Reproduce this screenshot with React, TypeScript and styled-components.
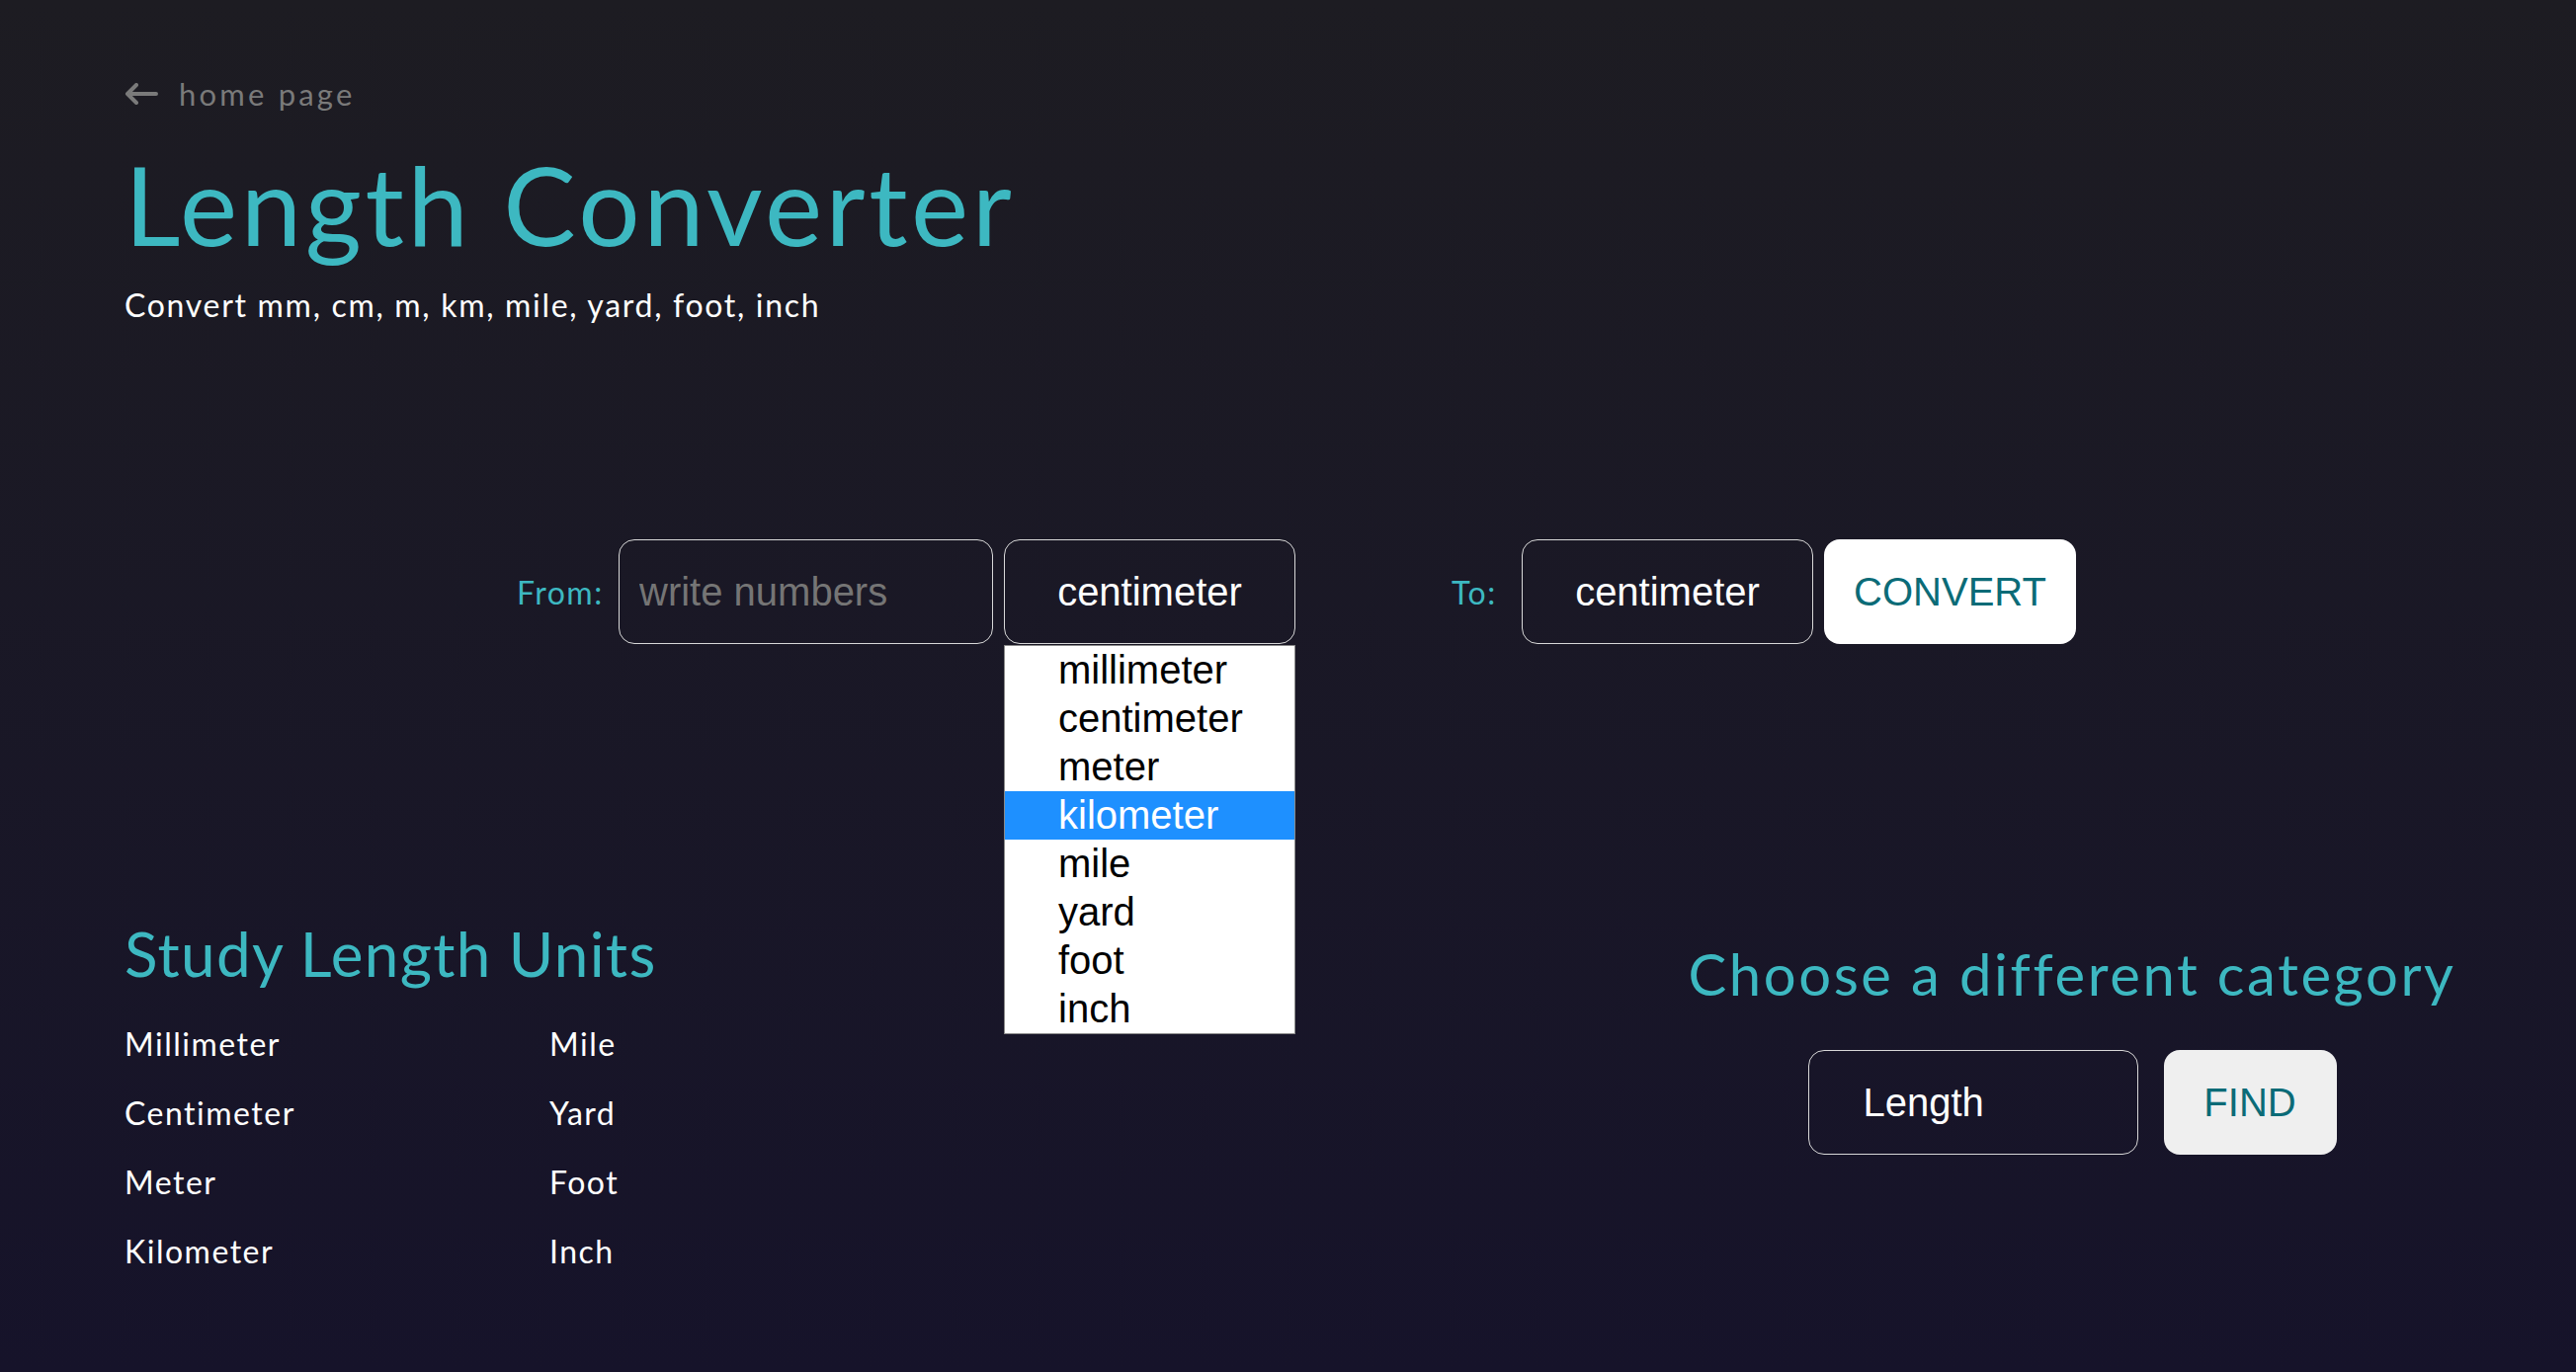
import React from "react";
import styled, { createGlobalStyle } from "styled-components";

const GlobalStyle = createGlobalStyle`
  html, body {
    margin: 0;
    padding: 0;
  }
  body {
    font-family: "Lato", "Open Sans", sans-serif;
  }
  * {
    box-sizing: border-box;
  }
`;

const Page = styled.div`
  min-height: 100vh;
  background: linear-gradient(180deg, #1d1c22 0%, #16132a 100%);
  padding: 77px 110px 0 126px;
  color: #ffffff;
`;

const BackLink = styled.a`
  display: flex;
  align-items: center;
  gap: 21px;
  height: 36px;
  font-size: 31px;
  line-height: 36px;
  letter-spacing: 3.2px;
  color: #7a7a7a;
  text-decoration: none;
`;

const Title = styled.h1`
  margin: 27px 0 0;
  font-size: 110px;
  line-height: 132px;
  font-weight: 400;
  letter-spacing: 3.6px;
  color: #3db8c1;
`;

const Subtitle = styled.p`
  margin: 18px 0 0;
  font-size: 32px;
  line-height: 38px;
  letter-spacing: 1.7px;
  color: #ffffff;
`;

const ConverterRow = styled.div`
  display: flex;
  align-items: center;
  margin: 218px 0 0 397px;
`;

const Label = styled.label<{ $width: number; $gap: number; $before?: number }>`
  width: ${(p) => p.$width}px;
  margin-left: ${(p) => p.$before ?? 0}px;
  margin-right: ${(p) => p.$gap}px;
  text-align: right;
  font-size: 32px;
  letter-spacing: 1.5px;
  color: #3db8c1;
  white-space: nowrap;
`;

const NumberInput = styled.input`
  width: 379px;
  height: 106px;
  padding: 0 20px;
  border: 1px solid #d8d8d8;
  border-radius: 16px;
  background: transparent;
  color: #ffffff;
  font-family: "Liberation Sans", Arial, sans-serif;
  font-size: 40px;
  outline: none;
  &::placeholder {
    color: #757575;
  }
`;

const SelectWrap = styled.div`
  position: relative;
  margin-left: 11px;
`;

const UnitSelect = styled.select<{ $align?: string; $width?: number }>`
  appearance: none;
  height: 106px;
  width: ${(p) => (p.$width ? `${p.$width}px` : "auto")};
  padding: 0 53px 0 ${(p) => (p.$align === "left" ? 55 : 53)}px;
  border: 1px solid #d8d8d8;
  border-radius: 16px;
  background: transparent;
  color: #ffffff;
  font-family: "Liberation Sans", Arial, sans-serif;
  font-size: 40px;
  text-align: ${(p) => p.$align ?? "center"};
  text-align-last: ${(p) => p.$align ?? "center"};
  outline: none;
  option {
    color: #000000;
  }
`;

const OptionList = styled.ul`
  position: absolute;
  top: calc(100% + 1px);
  left: 0;
  right: 0;
  margin: 0;
  padding: 0;
  list-style: none;
  background: #ffffff;
  border: 1px solid #8a8a8a;
  z-index: 2;
`;

const OptionItem = styled.li<{ $active?: boolean }>`
  height: 49px;
  padding-left: 54px;
  font-family: "Liberation Sans", Arial, sans-serif;
  font-size: 40px;
  line-height: 49px;
  color: ${(p) => (p.$active ? "#ffffff" : "#000000")};
  background: ${(p) => (p.$active ? "#1e90ff" : "transparent")};
`;

const ActionButton = styled.button<{ $bg: string; $width: number; $gap: number }>`
  height: 106px;
  width: ${(p) => p.$width}px;
  margin-left: ${(p) => p.$gap}px;
  border: none;
  border-radius: 16px;
  background: ${(p) => p.$bg};
  color: #0b6b77;
  font-family: "Liberation Sans", Arial, sans-serif;
  font-size: 40px;
  cursor: pointer;
`;

const BottomSection = styled.div`
  display: flex;
  justify-content: space-between;
  align-items: flex-start;
  margin-top: 276px;
`;

const StudyColumn = styled.div`
  display: flex;
  flex-direction: column;
`;

const SectionTitle = styled.h2<{ $size: number; $spacing: number }>`
  margin: 0;
  font-size: ${(p) => p.$size}px;
  line-height: ${(p) => Math.round(p.$size * 1.2)}px;
  letter-spacing: ${(p) => p.$spacing}px;
  font-weight: 400;
  color: #3db8c1;
  white-space: nowrap;
`;

const UnitGrid = styled.div`
  display: grid;
  grid-template-columns: 430px auto;
  grid-auto-flow: column;
  grid-template-rows: repeat(4, 70px);
  margin-top: 20px;
`;

const UnitName = styled.span`
  font-size: 32px;
  line-height: 70px;
  letter-spacing: 1.5px;
  color: #ffffff;
`;

const CategoryColumn = styled.div`
  width: 800px;
  margin-top: 23px;
  display: flex;
  flex-direction: column;
  align-items: center;
`;

const FindForm = styled.div`
  display: flex;
  align-items: center;
  margin-top: 42px;
`;

const units = ["Millimeter", "Centimeter", "Meter", "Kilometer", "Mile", "Yard", "Foot", "Inch"];
const options = ["millimeter", "centimeter", "meter", "kilometer", "mile", "yard", "foot", "inch"];

function BackArrow() {
  return (
    <svg width="34" height="22" viewBox="0 0 34 22" fill="none">
      <path
        d="M32 11H4M12 2L3 11L12 20"
        stroke="#7a7a7a"
        strokeWidth="4"
        strokeLinecap="round"
        strokeLinejoin="round"
      />
    </svg>
  );
}

export default function App() {
  return (
    <>
      <GlobalStyle />
      <Page>
        <BackLink href="#">
          <BackArrow />
          home page
        </BackLink>
        <Title>Length Converter</Title>
        <Subtitle>Convert mm, cm, m, km, mile, yard, foot, inch</Subtitle>

        <ConverterRow>
          <Label $width={87} $gap={16}>From:</Label>
          <NumberInput placeholder="write numbers" />
          <SelectWrap>
            <UnitSelect defaultValue="centimeter">
              {options.map((o) => (
                <option key={o} value={o}>{o}</option>
              ))}
            </UnitSelect>
            <OptionList>
              {options.map((o) => (
                <OptionItem key={o} $active={o === "kilometer"}>{o}</OptionItem>
              ))}
            </OptionList>
          </SelectWrap>
          <Label $width={44} $gap={27} $before={158}>To:</Label>
          <UnitSelect defaultValue="centimeter">
            {options.map((o) => (
              <option key={o} value={o}>{o}</option>
            ))}
          </UnitSelect>
          <ActionButton $bg="#ffffff" $width={255} $gap={11}>CONVERT</ActionButton>
        </ConverterRow>

        <BottomSection>
          <StudyColumn>
            <SectionTitle $size={62} $spacing={1.3}>Study Length Units</SectionTitle>
            <UnitGrid>
              {units.map((u) => (
                <UnitName key={u}>{u}</UnitName>
              ))}
            </UnitGrid>
          </StudyColumn>
          <CategoryColumn>
            <SectionTitle $size={58} $spacing={2.6}>Choose a different category</SectionTitle>
            <FindForm>
              <UnitSelect defaultValue="Length" $align="left" $width={334}>
                <option value="Length">Length</option>
                <option value="Weight">Weight</option>
                <option value="Temperature">Temperature</option>
              </UnitSelect>
              <ActionButton $bg="#efefef" $width={175} $gap={26}>FIND</ActionButton>
            </FindForm>
          </CategoryColumn>
        </BottomSection>
      </Page>
    </>
  );
}
